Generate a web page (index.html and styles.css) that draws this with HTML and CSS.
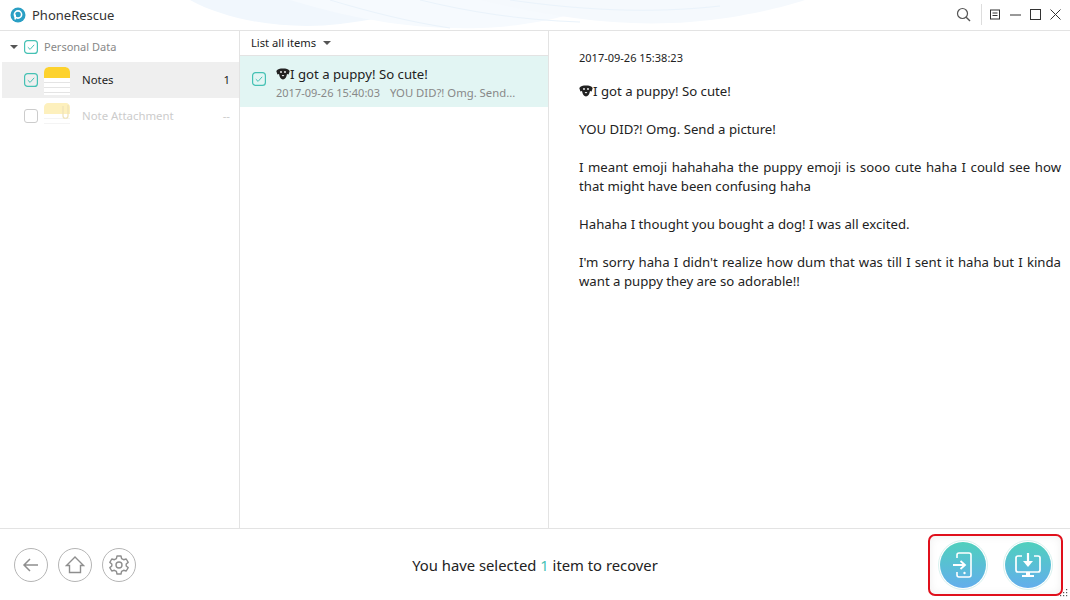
FILE: index.html
```html
<!DOCTYPE html>
<html lang="en">
<head>
    <meta charset="UTF-8">
    <meta name="viewport" content="width=device-width, initial-scale=1.0">
    <title>PhoneRescue</title>
    <link rel="stylesheet" href="styles.css">
</head>
<body>
    <svg class="icon-defs" width="0" height="0">
        <defs>
            <symbol id="puppy" viewBox="0 0 14 12">
                <path d="M0.3 3 C1.5 1 4 0.5 7 0.5 C10 0.5 12.5 1 13.7 3 L12.6 6.5 L11 6 C10.5 9 9 11.5 7 11.5 C5 11.5 3.5 9 3 6 L1.4 6.5 Z" fill="#222"/>
                <circle cx="5" cy="4" r="0.9" fill="#fff"/>
                <circle cx="9" cy="4" r="0.9" fill="#fff"/>
                <path d="M5.6 7 H8.4 L7 8.6 Z" fill="#fff"/>
            </symbol>
            <symbol id="tick" viewBox="0 0 14 14">
                <rect x="0.6" y="0.6" width="12.8" height="12.8" rx="3" fill="none" stroke="#45c1b4" stroke-width="1.2"/>
                <path d="M3.8 7.2 L6.1 9.4 L10.2 4.8" fill="none" stroke="#45c1b4"/>
            </symbol>
            <linearGradient id="tealBlue" x1="0" y1="0" x2="0" y2="1">
                <stop offset="0" stop-color="#4fd0bd"/>
                <stop offset="1" stop-color="#63aeec"/>
            </linearGradient>
        </defs>
    </svg>

    <div class="window">
        <!-- Title bar -->
        <header class="titlebar">
            <svg class="waves" width="640" height="30" viewBox="0 0 640 30" fill="none">
                <path d="M10 0 C50 22 110 30 160 24 C220 16 260 6 300 0 Z" fill="#f1f7fd"/>
                <path d="M110 0 C170 18 230 30 300 28 C360 26 400 12 440 0 Z" fill="#f6fafe"/>
                <path d="M300 0 C360 14 430 28 510 22 C560 18 600 8 625 0 Z" fill="#f5f9fd"/>
                <path d="M150 0 C190 12 230 22 270 28 M240 0 C290 12 340 20 400 22 M330 0 C400 10 470 14 540 6" stroke="#eaf3fb"/>
            </svg>
            <div class="brand">
                <svg width="16" height="16" viewBox="0 0 16 16">
                    <circle cx="8" cy="8" r="7.5" fill="#2a9fc4"/>
                    <circle cx="8" cy="7.5" r="3.6" fill="none" stroke="#fff" stroke-width="1.6"/>
                    <path d="M5.2 7.5 V12.5" stroke="#fff" stroke-width="1.6"/>
                </svg>
                <span>PhoneRescue</span>
            </div>
            <div class="window-tools">
                <svg class="tool search" width="15" height="15" viewBox="0 0 15 15">
                    <circle cx="6.5" cy="6.5" r="5" fill="none" stroke="#555" stroke-width="1.2"/>
                    <path d="M10.2 10.2 L14 14" stroke="#555" stroke-width="1.4"/>
                </svg>
                <span class="tool-divider"></span>
                <svg class="tool" width="11" height="11" viewBox="0 0 11 11">
                    <rect x="0.5" y="1" width="9" height="9" fill="none" stroke="#333"/>
                    <path d="M2.5 4 H7.5 M2.5 6.5 H7.5" stroke="#333"/>
                </svg>
                <svg class="tool" width="11" height="11" viewBox="0 0 11 11"><path d="M0 6 H11" stroke="#333"/></svg>
                <svg class="tool" width="11" height="11" viewBox="0 0 11 11"><rect x="0.5" y="0.5" width="10" height="10" fill="none" stroke="#333"/></svg>
                <svg class="tool" width="11" height="11" viewBox="0 0 11 11"><path d="M0.5 0.5 L10.5 10.5 M10.5 0.5 L0.5 10.5" stroke="#333"/></svg>
            </div>
        </header>

        <main class="columns">
            <!-- Category list -->
            <aside class="sidebar">
                <div class="group-row">
                    <span class="caret"></span>
                    <svg class="check" width="14" height="14"><use href="#tick"/></svg>
                    <span>Personal Data</span>
                </div>
                <div class="cat-row active">
                    <svg class="check" width="14" height="14"><use href="#tick"/></svg>
                    <svg class="note-icon" width="28" height="30" viewBox="0 0 28 30">
                        <path d="M1 12 V7 C1 3 3 1 7 1 H21 C25 1 27 3 27 7 V12 Z" fill="#fdd22d"/>
                        <rect x="1" y="12" width="26" height="17" fill="#fff"/>
                        <path d="M1 16.5 H27 M1 21.5 H27 M1 26.5 H27" stroke="#e4e4e4"/>
                    </svg>
                    <span class="cat-name">Notes</span>
                    <span class="cat-count">1</span>
                </div>
                <div class="cat-row disabled">
                    <span class="check empty"></span>
                    <svg class="note-icon" width="28" height="30" viewBox="0 0 28 30">
                        <path d="M1 12 V5 C1 3 3 1 5 1 H23 C25 1 27 3 27 5 V12 Z" fill="#fdf0bd"/>
                        <path d="M1 16.5 H27 M1 21.5 H27" stroke="#f4f4f4"/>
                        <path d="M20 4 V14 C20 17 25 17 25 14 V3" fill="none" stroke="#eee2b8" stroke-width="1.2"/>
                    </svg>
                    <span class="cat-name">Note Attachment</span>
                    <span class="cat-count">--</span>
                </div>
            </aside>

            <!-- Note list -->
            <section class="item-list">
                <div class="list-filter">List all items <span class="caret"></span></div>
                <div class="item-row">
                    <svg class="check" width="14" height="14"><use href="#tick"/></svg>
                    <div class="item-text">
                        <div class="item-title"><svg class="puppy" width="14" height="12"><use href="#puppy"/></svg>I got a puppy! So cute!</div>
                        <div class="item-sub"><span>2017-09-26 15:40:03</span><span>YOU DID?! Omg. Send...</span></div>
                    </div>
                </div>
            </section>

            <!-- Note content -->
            <article class="detail">
                <div class="detail-date">2017-09-26 15:38:23</div>
                <p><svg class="puppy" width="14" height="12"><use href="#puppy"/></svg>I got a puppy! So cute!</p>
                <p>YOU DID?! Omg. Send a picture!</p>
                <p>I meant emoji hahahaha the puppy emoji is sooo cute haha I could see how that might have been confusing haha</p>
                <p>Hahaha I thought you bought a dog! I was all excited.</p>
                <p>I'm sorry haha I didn't realize how dum that was till I sent it haha but I kinda want a puppy they are so adorable!!</p>
            </article>
        </main>

        <!-- Bottom bar -->
        <footer class="bottombar">
            <div class="nav-btns">
                <button class="nav-btn">
                    <svg width="20" height="20" viewBox="0 0 20 20" fill="none" stroke="#8e8e8e" stroke-width="1.5">
                        <path d="M17 10 H3 M9 4 L3 10 L9 16"/>
                    </svg>
                </button>
                <button class="nav-btn">
                    <svg width="20" height="20" viewBox="0 0 20 20" fill="none" stroke="#8e8e8e" stroke-width="1.4">
                        <path d="M1.5 10.5 L10 2 L18.5 10.5 H15.5 V17.5 H4.5 V10.5 Z"/>
                    </svg>
                </button>
                <button class="nav-btn">
                    <svg width="22" height="22" viewBox="0 0 22 22" fill="none" stroke="#8e8e8e" stroke-width="1.4">
                        <path d="M9 2 H13 L13.6 4.6 L15.6 5.7 L18.2 5 L20.2 8.4 L18.2 10 V12 L20.2 13.6 L18.2 17 L15.6 16.3 L13.6 17.4 L13 20 H9 L8.4 17.4 L6.4 16.3 L3.8 17 L1.8 13.6 L3.8 12 V10 L1.8 8.4 L3.8 5 L6.4 5.7 L8.4 4.6 Z" stroke-linejoin="round"/>
                        <circle cx="11" cy="11" r="3"/>
                    </svg>
                </button>
            </div>
            <div class="selected-msg">You have selected <span class="num">1</span> item to recover</div>
            <div class="recover-btns">
                <button class="recover-btn">
                    <svg width="46" height="46" viewBox="0 0 46 46">
                        <circle cx="23" cy="23" r="23" fill="url(#tealBlue)"/>
                        <path d="M17 16 V13 C17 12 18 11 19 11 H29 C30 11 31 12 31 13 V33 C31 34 30 35 29 35 H19 C18 35 17 34 17 33 V30" fill="none" stroke="#fff" stroke-width="1.6"/>
                        <path d="M13 23 H24 M20.5 19 L25 23 L20.5 27" fill="none" stroke="#fff" stroke-width="1.8"/>
                        <circle cx="24.5" cy="31" r="1.2" fill="#fff"/>
                    </svg>
                </button>
                <button class="recover-btn">
                    <svg width="46" height="46" viewBox="0 0 46 46">
                        <circle cx="23" cy="23" r="23" fill="url(#tealBlue)"/>
                        <path d="M17 14 H13 C12 14 11 15 11 16 V28 C11 29 12 30 13 30 H33 C34 30 35 29 35 28 V16 C35 15 34 14 33 14 H29" fill="none" stroke="#fff" stroke-width="1.7"/>
                        <path d="M23 11 V21" stroke="#fff" stroke-width="2.2"/>
                        <path d="M18 19 H28 L23 25 Z" fill="#fff"/>
                        <path d="M21 30 H25 V33 H29 V35 H17 V33 H21 Z" fill="#fff"/>
                    </svg>
                </button>
            </div>
            <svg class="grip" width="9" height="9" viewBox="0 0 9 9" fill="#555">
                <rect x="6" y="0" width="1.2" height="1.2"/>
                <rect x="3" y="3" width="1.2" height="1.2"/><rect x="6" y="3" width="1.2" height="1.2"/>
                <rect x="0" y="6" width="1.2" height="1.2"/><rect x="3" y="6" width="1.2" height="1.2"/><rect x="6" y="6" width="1.2" height="1.2"/>
            </svg>
        </footer>
    </div>
</body>
</html>
```

FILE: styles.css
```css
* {
    box-sizing: border-box;
}

body {
    margin: 0;
    background-color: #fff;
    color: #222;
    font-family: "Noto Sans", "Open Sans", sans-serif;
    font-size: 13px;
}

.icon-defs {
    position: absolute;
}

.window {
    display: flex;
    flex-direction: column;
    height: 600px;
}

/* title bar */
.titlebar {
    position: relative;
    display: flex;
    align-items: center;
    justify-content: space-between;
    flex: 0 0 31px;
    padding: 0 9px 1px 10px;
    border-bottom: 1px solid #e3e3e3;
}

.waves {
    position: absolute;
    top: 0;
    left: 180px;
}

.brand {
    position: relative;
    display: flex;
    align-items: center;
    gap: 6px;
    font-size: 13px;
    color: #333;
}

.window-tools {
    position: relative;
    display: flex;
    align-items: center;
    gap: 9px;
}

.tool-divider {
    width: 1px;
    height: 21px;
    margin: 0 -1px 0 1px;
    background-color: #ddd;
}

/* columns */
.columns {
    display: flex;
    flex: 1;
    min-height: 0;
}

.sidebar {
    flex: 0 0 240px;
    border-right: 1px solid #e3e3e3;
}

.group-row {
    display: flex;
    align-items: center;
    height: 31px;
    padding-left: 10px;
    color: #888;
    font-size: 11px;
}

.group-row .caret {
    margin-right: 6px;
}

.group-row .check {
    margin-right: 6px;
}

.caret {
    display: inline-block;
    width: 0;
    height: 0;
    border-left: 4px solid transparent;
    border-right: 4px solid transparent;
    border-top: 4px solid #555;
}

.check {
    flex: none;
}

.check.empty {
    width: 14px;
    height: 14px;
    border: 1px solid #ccc;
    border-radius: 3px;
}

.cat-row {
    display: flex;
    align-items: center;
    height: 36px;
    margin-left: 2px;
    padding: 0 9px 0 22px;
    font-size: 11.4px;
}

.cat-row.active {
    background-color: #efefef;
}

.cat-row.disabled {
    color: #ccc;
}

.note-icon {
    margin: 1px 0 0 5px;
}

.cat-name {
    flex: 1;
    margin-left: 11px;
    padding-bottom: 1px;
}

.cat-count {
    padding-bottom: 1px;
}

/* note list */
.item-list {
    flex: 0 0 309px;
    border-right: 1px solid #e3e3e3;
}

.list-filter {
    display: flex;
    align-items: center;
    gap: 7px;
    height: 25px;
    padding: 0 0 1px 11px;
    border-bottom: 1px solid #e3e3e3;
    font-size: 11.2px;
}

.item-row {
    display: flex;
    align-items: flex-start;
    height: 51px;
    padding: 9px 0 0 12px;
    background-color: #e2f5f3;
}

.item-row .check {
    margin-top: 7px;
}

.item-text {
    margin-left: 10px;
}

.item-title {
    font-size: 13.2px;
    line-height: 19px;
}

.puppy {
    vertical-align: -1px;
}

.item-sub {
    display: flex;
    gap: 10px;
    color: #888;
    font-size: 11px;
    line-height: 17px;
}

.item-sub span + span {
    font-size: 11.3px;
}

/* note content */
.detail {
    flex: 1;
    padding: 17px 9px 0 30px;
    font-size: 13.2px;
    line-height: 19px;
}

.detail-date {
    margin-bottom: 15px;
    font-size: 11px;
}

.detail p {
    margin: 0 0 19px;
    text-align: justify;
}

/* bottom bar */
.bottombar {
    position: relative;
    display: flex;
    align-items: center;
    flex: 0 0 72px;
    padding: 0 7px 0 14px;
    border-top: 1px solid #e3e3e3;
}

.nav-btns {
    display: flex;
    gap: 10px;
}

.nav-btn {
    display: flex;
    align-items: center;
    justify-content: center;
    width: 34px;
    height: 34px;
    padding: 0;
    background: none;
    border: 1px solid #b5b5b5;
    border-radius: 50%;
}

.selected-msg {
    flex: 1;
    padding-left: 6px;
    text-align: center;
    font-size: 14.8px;
}

.num {
    color: #45c1b4;
}

.recover-btns {
    display: flex;
    gap: 15px;
    padding: 4px 8px;
    border: 2px solid #e0101c;
    border-radius: 7px;
    box-shadow: inset 0 0 8px #eee;
}

.recover-btn {
    width: 50px;
    height: 50px;
    padding: 1px;
    background: #fff;
    border: 1px solid #d9f2ef;
    border-radius: 50%;
}

.recover-btn svg {
    display: block;
}

.grip {
    position: absolute;
    right: 1px;
    bottom: 2px;
}
```
